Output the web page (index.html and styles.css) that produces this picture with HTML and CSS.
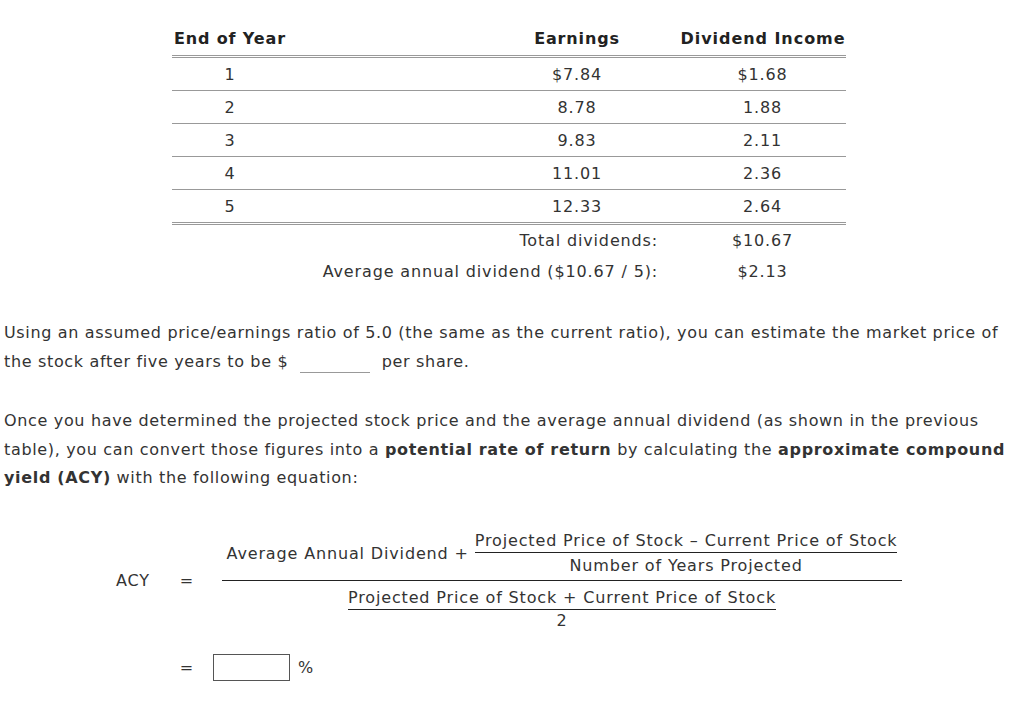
FILE: index.html
```html
<!DOCTYPE html>
<html>
<head>
<meta charset="utf-8">
<link rel="stylesheet" href="styles.css">
</head>
<body>
<div class="page">
  <table class="data">
    <colgroup>
      <col class="c1"><col class="c2"><col class="c3"><col class="c4">
    </colgroup>
    <thead>
      <tr>
        <th class="left">End of Year</th>
        <th></th>
        <th>Earnings</th>
        <th class="div">Dividend Income</th>
      </tr>
    </thead>
    <tbody>
      <tr><td>1</td><td></td><td>$7.84</td><td class="div">$1.68</td></tr>
      <tr><td>2</td><td></td><td>8.78</td><td class="div">1.88</td></tr>
      <tr><td>3</td><td></td><td>9.83</td><td class="div">2.11</td></tr>
      <tr><td>4</td><td></td><td>11.01</td><td class="div">2.36</td></tr>
      <tr class="last"><td>5</td><td></td><td>12.33</td><td class="div">2.64</td></tr>
    </tbody>
    <tfoot>
      <tr><td colspan="3" class="right">Total dividends:</td><td class="div">$10.67</td></tr>
      <tr><td colspan="3" class="right">Average annual dividend ($10.67 / 5):</td><td class="div">$2.13</td></tr>
    </tfoot>
  </table>

  <p class="para p1">Using an assumed price/earnings ratio of 5.0 (the same as the current ratio), you can estimate the market price of the stock after five years to be $ <span class="blank"></span> per share.</p>

  <p class="para p2">Once you have determined the projected stock price and the average annual dividend (as shown in the previous table), you can convert those figures into a <b>potential rate of return</b> by calculating the <b>approximate compound yield (ACY)</b> with the following equation:</p>

  <div class="formula">
    <div class="frow">
      <div class="label">ACY</div>
      <div class="eq">=</div>
      <div class="bigfrac">
        <div class="bignum">
          <span class="addend">Average Annual Dividend +</span>
          <div class="frac">
            <div class="fnum">Projected Price of Stock – Current Price of Stock</div>
            <div class="fden">Number of Years Projected</div>
          </div>
        </div>
        <div class="bigden">
          <div class="frac">
            <div class="fnum">Projected Price of Stock + Current Price of Stock</div>
            <div class="fden two">2</div>
          </div>
        </div>
      </div>
    </div>
    <div class="arow">
      <div class="eq">=</div>
      <div class="box"></div>
      <div class="pct">%</div>
    </div>
  </div>
</div>
</body>
</html>
```
FILE: styles.css
```css
html, body {
  margin: 0;
  padding: 0;
  background: #fff;
}
body {
  font-family: "DejaVu Sans", Verdana, sans-serif;
  font-size: 16px;
  color: #333;
}
.page {
  padding: 22px 4px 0 4px;
}
.data {
  border-collapse: collapse;
  margin-left: 168px;
  width: 674px;
  table-layout: fixed;
  letter-spacing: 0.85px;
}
.c1 { width: 116px; }
.c2 { width: 200px; }
.c3 { width: 178px; }
.c4 { width: 180px; }
.data th {
  font-weight: bold;
  height: 33px;
  padding: 0;
  text-align: center;
  white-space: nowrap;
  border-bottom: 3px double #999;
  color: #222;
}
.data th.left {
  text-align: left;
  padding-left: 2px;
}
.data th.div {
  letter-spacing: 0.95px;
}
.data .div {
  padding-left: 14px;
}
.data tbody td {
  height: 32px;
  padding-top: 0;
  padding-bottom: 0;
  text-align: center;
  border-bottom: 1px solid #999;
}
.data tbody tr.last td {
  border-bottom: 3px double #999;
}
.data tfoot td {
  height: 31px;
  padding-top: 0;
  padding-bottom: 0;
  text-align: center;
}
.data tfoot td.right {
  text-align: right;
  padding-right: 8px;
}
.para {
  margin: 0;
  line-height: 29px;
  letter-spacing: 0.66px;
  width: 1012px;
}
.p1 {
  margin-top: 31px;
}
.p2 {
  margin-top: 31px;
  line-height: 28.5px;
}
.blank {
  display: inline-block;
  width: 70px;
  height: 1px;
  border-bottom: 1px solid #999;
  margin: 0 6px;
  vertical-align: -6px;
}
.formula {
  margin-top: 38px;
  letter-spacing: 0.85px;
}
.frow {
  display: flex;
  align-items: center;
}
.label {
  width: 40px;
  margin-left: 109px;
  text-align: center;
}
.eq {
  width: 20px;
  text-align: center;
  margin-left: 24px;
}
.bigfrac {
  margin-left: 25px;
  width: 680px;
  display: flex;
  flex-direction: column;
  align-items: center;
}
.bignum {
  display: flex;
  align-items: center;
  padding-bottom: 4px;
  border-bottom: 1px solid #222;
  width: 100%;
  justify-content: center;
}
.addend {
  margin-right: 6px;
}
.frac {
  display: flex;
  flex-direction: column;
  align-items: stretch;
  text-align: center;
}
.fnum {
  line-height: 20px;
  border-bottom: 1px solid #222;
  padding-bottom: 1px;
}
.fden {
  line-height: 20px;
  padding-top: 3px;
}
.fden.two {
  padding-top: 1px;
}
.bigden {
  padding-top: 7px;
}
.arow {
  display: flex;
  align-items: center;
  margin-top: 23px;
}
.arow .eq {
  margin-left: 173px;
}
.box {
  margin-left: 16px;
  width: 75px;
  height: 25px;
  border: 1px solid #555;
}
.pct {
  margin-left: 8px;
}
```
